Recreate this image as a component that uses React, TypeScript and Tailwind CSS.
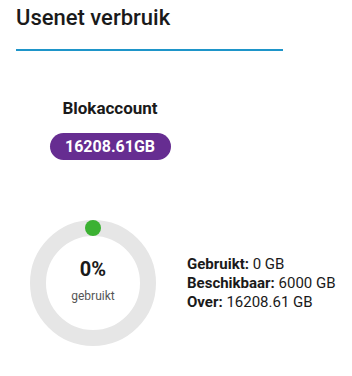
export default function App() {
  return (
    <div className="h-[376px] w-[352px] bg-white font-['Roboto',sans-serif] text-[#1a1a1a]">
      <div className="px-4 pt-[3px]">
        <h2 className="text-[22px] leading-[30px] font-medium">Usenet verbruik</h2>
        <div className="mt-[16px] h-[2px] w-[267px] bg-[#1e95c9]" />
      </div>

      <div className="mt-[46px] flex w-[220px] flex-col items-center">
        <div className="text-[17px] leading-[22px] font-bold">Blokaccount</div>
        <div className="mt-[14px] flex h-[27px] w-[121px] items-center justify-center rounded-full bg-[#662d91] text-[16px] font-bold text-white">
          16208.61GB
        </div>
      </div>

      <div className="mt-[60px] flex items-center">
        <div className="relative ml-[30px] h-[126px] w-[126px]">
          <svg width="126" height="126" viewBox="0 0 126 126">
            <circle cx="63" cy="63" r="55" fill="none" stroke="#e6e6e6" strokeWidth="16" />
            <circle cx="63" cy="8" r="8" fill="#3bb132" />
          </svg>
          <div className="absolute inset-0 flex flex-col items-center justify-center">
            <div className="mt-[-6px] text-[20px] leading-[24px] font-bold">0%</div>
            <div className="mt-[7px] text-[12px] leading-[16px] text-[#555]">gebruikt</div>
          </div>
        </div>
        <div className="ml-[31px] text-[15px] leading-[19px]">
          <div>
            <span className="font-bold">Gebruikt:</span> 0 GB
          </div>
          <div>
            <span className="font-bold">Beschikbaar:</span> 6000 GB
          </div>
          <div>
            <span className="font-bold">Over:</span> 16208.61 GB
          </div>
        </div>
      </div>
    </div>
  );
}
